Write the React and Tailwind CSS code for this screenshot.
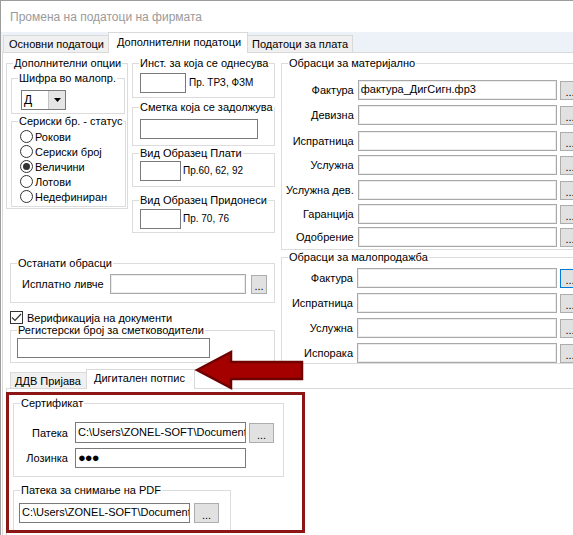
import React from 'react'

const GroupBox = ({ label, className = '', children }) => (
  <fieldset className={`border border-[#dcdcdc] min-w-0 ${className}`}>
    <legend className="ml-[6px] px-[1px] leading-[14px] h-[14px] whitespace-nowrap">{label}</legend>
    {children}
  </fieldset>
)

const TextBox = ({ value = '', className = '' }) => (
  <div className={`bg-white border px-[2px] leading-[17px] whitespace-nowrap overflow-hidden ${className}`}>{value}</div>
)

const Dots = ({ className = '' }) => (
  <div className={`bg-[#e1e1e1] border flex items-end justify-center pb-[1px] leading-[12px] ${className}`}>...</div>
)

const Radio = ({ label, checked }) => (
  <div className="h-[15px] flex items-center ml-[8px]">
    <span className="w-[13px] h-[13px] rounded-full border border-[#333333] bg-white flex items-center justify-center">
      {checked && <span className="w-[7px] h-[7px] rounded-full bg-[#333333]" />}
    </span>
    <span className="ml-[2px]">{label}</span>
  </div>
)

const material = [
  { label: 'Фактура', value: 'фактура_ДигСигн.фр3', mt: 'mt-[10px]' },
  { label: 'Девизна', mt: 'mt-[5px]' },
  { label: 'Испратница', mt: 'mt-[6px]' },
  { label: 'Услужна', mt: 'mt-[4px]' },
  { label: 'Услужна дев.', mt: 'mt-[5px]' },
  { label: 'Гаранција', mt: 'mt-[4px]' },
  { label: 'Одобрение', mt: 'mt-[3px]' },
]

const retail = [
  { label: 'Фактура', mt: 'mt-[4px]', focus: true },
  { label: 'Испратница', mt: 'mt-[5px]' },
  { label: 'Услужна', mt: 'mt-[5px]' },
  { label: 'Испорака', mt: 'mt-[5px]' },
]

const FileRow = ({ label, value, mt, focus, labelW }) => (
  <div className={`flex items-center h-[20px] ${mt}`}>
    <div className={`text-right whitespace-nowrap ${labelW}`}>{label}</div>
    <TextBox value={value} className="ml-[4px] w-[200px] h-[20px] border-[#a9a9a9] shadow-[inset_0_0_0_1px_#ececec]" />
    <Dots className={`ml-[3px] w-[20px] h-[19px] ${focus ? 'border-[#0078d7]' : 'border-[#adadad]'}`} />
  </div>
)

export default function App() {
  return (
    <div className="relative w-[573px] h-[535px] overflow-hidden bg-white border-l border-t border-[#9c9c9c] text-[11px] leading-[14px] text-black font-['Liberation_Sans',Arial,sans-serif] flex flex-col">
      {/* title */}
      <div className="h-[31px] shrink-0 pl-[9px] flex items-center text-[#9a9a9a] text-[12px]">Промена на податоци на фирмата</div>

      {/* main tabs */}
      <div className="h-[20px] shrink-0 flex items-end pl-[2px] bg-[#edf2f9] whitespace-nowrap">
        <div className="w-[105px] h-[17px] bg-[#f0f0f0] border-l border-t border-[#d9d9d9] pl-[5px] flex items-center">Основни податоци</div>
        <div className="w-[140px] h-[21px] -mb-px relative z-10 bg-white border-l border-t border-r border-[#d9d9d9] pl-[8px] pt-[2px]">Дополнителни податоци</div>
        <div className="w-[105px] h-[17px] bg-[#f0f0f0] border-t border-r border-[#d9d9d9] pl-[4px] flex items-center">Податоци за плата</div>
      </div>

      {/* main panel */}
      <div className="flex-1 ml-[1px] border-t border-l border-[#d9d9d9] flex flex-col">
        <div className="h-[313px] shrink-0 flex">
          {/* left part */}
          <div className="w-[277px] shrink-0 flex flex-col">
            <div className="flex">
              <GroupBox label="Дополнителни опции" className="ml-[3px] mt-[3px] w-[122px] h-[153px]">
                <GroupBox label="Шифра во малопр." className="ml-[4px] mt-[1px] w-[114px] h-[43px]">
                  <div className="ml-[9px] mt-[5px] w-[45px] h-[20px] border border-[#7a7a7a] bg-white flex">
                    <div className="flex-1 pl-[2px] leading-[18px] text-[12px]">Д</div>
                    <div className="w-[17px] bg-[#e5e5e5] border-l border-[#c4c4c4] flex items-center justify-center">
                      <svg width="7" height="4" viewBox="0 0 7 4"><path d="M0 0H7L3.5 4Z" fill="#000" /></svg>
                    </div>
                  </div>
                </GroupBox>
                <GroupBox label="Сериски бр. - статус" className="ml-[4px] w-[115px] h-[93px]">
                  <div className="mt-[1px]">
                    <Radio label="Рокови" />
                    <Radio label="Сериски број" />
                    <Radio label="Величини" checked />
                    <Radio label="Лотови" />
                    <Radio label="Недефиниран" />
                  </div>
                </GroupBox>
              </GroupBox>

              <div className="ml-[4px] w-[143px] flex flex-col">
                <GroupBox label="Инст. за која се однесува" className="mt-[3px] h-[42px]">
                  <div className="mt-[3px] ml-[7px] flex items-center">
                    <TextBox className="w-[46px] h-[20px] border-[#7a7a7a]" />
                    <span className="ml-[3px] text-[10px]">Пр. ТРЗ, ФЗМ</span>
                  </div>
                </GroupBox>
                <GroupBox label="Сметка која се задолжува" className="mt-[2px] h-[46px]">
                  <TextBox className="mt-[5px] ml-[7px] w-[118px] h-[20px] border-[#7a7a7a]" />
                </GroupBox>
                <GroupBox label="Вид Образец Плати" className="h-[41px]">
                  <div className="mt-[1px] ml-[7px] flex items-center">
                    <TextBox className="w-[41px] h-[20px] border-[#7a7a7a]" />
                    <span className="ml-[2px] text-[10px]">Пр.60, 62, 92</span>
                  </div>
                </GroupBox>
                <GroupBox label="Вид Образец Придонеси" className="mt-[6px] h-[40px]">
                  <div className="mt-[2px] ml-[7px] flex items-center">
                    <TextBox className="w-[41px] h-[20px] border-[#7a7a7a]" />
                    <span className="ml-[2px] text-[10px]">Пр. 70, 76</span>
                  </div>
                </GroupBox>
              </div>
            </div>

            <GroupBox label="Останати обрасци" className="ml-[7px] mt-[23px] w-[265px] h-[47px]">
              <div className="mt-[4px] h-[20px] flex items-center">
                <div className="w-[99px] pl-[11px] whitespace-nowrap">Исплатно ливче</div>
                <TextBox className="w-[136px] h-[20px] border-[#a9a9a9] shadow-[inset_0_0_0_1px_#ececec]" />
                <Dots className="ml-[5px] w-[16px] h-[19px] border-[#adadad]" />
              </div>
            </GroupBox>

            <div className="ml-[7px] mt-[8px] h-[13px] flex items-center">
              <span className="w-[13px] h-[13px] border border-[#333333] bg-white flex items-center justify-center">
                <svg width="11" height="9" viewBox="0 0 11 9"><path d="M1 4.5L4 7.5L10 1" fill="none" stroke="#333" strokeWidth="1.2" /></svg>
              </span>
              <span className="ml-[4px]">Верификација на документи</span>
            </div>

            <GroupBox label="Регистерски број за сметководители" className="ml-[7px] -mt-[1px] w-[265px] h-[40px]">
              <TextBox className="mt-[1px] ml-[6px] w-[193px] h-[20px] border-[#7a7a7a]" />
            </GroupBox>
          </div>

          {/* right part */}
          <div className="w-[300px] shrink-0 flex flex-col">
            <GroupBox label="Обрасци за материјално" className="ml-[1px] mt-[3px] w-[300px] h-[194px]">
              {material.map((r) => (
                <FileRow key={r.label} {...r} labelW="w-[72px]" />
              ))}
            </GroupBox>
            <GroupBox label="Обрасци за малопродажба" className="ml-[1px] w-[300px] h-[114px]">
              {retail.map((r) => (
                <FileRow key={r.label} {...r} labelW="w-[71px]" />
              ))}
            </GroupBox>
          </div>
        </div>

        {/* inner tabs */}
        <div className="h-[22px] shrink-0 flex items-end pl-[7px] whitespace-nowrap">
          <div className="w-[76px] h-[16px] bg-[#f0f0f0] border-l border-t border-[#d9d9d9] pl-[4px] flex items-center">ДДВ Пријава</div>
          <div className="w-[109px] h-[20px] -mb-px relative z-10 bg-white border-l border-t border-r border-[#d9d9d9] pl-[7px] pt-[1px]">Дигитален потпис</div>
        </div>

        <div className="flex-1 ml-[3px] border-t border-l border-[#d9d9d9]">
          <GroupBox label="Сертификат" className="ml-[6px] mt-[7px] w-[271px] h-[81px]">
            <div className="mt-[12px] h-[21px] flex items-center">
              <div className="w-[54px] text-right">Патека</div>
              <TextBox value="C:\Users\ZONEL-SOFT\Documents" className="ml-[7px] w-[171px] h-[21px] border-[#7a7a7a] leading-[18px] px-[1px]" />
              <Dots className="ml-[3px] w-[25px] h-[20px] border-[#adadad]" />
            </div>
            <div className="mt-[5px] h-[20px] flex items-center">
              <div className="w-[54px] text-right">Лозинка</div>
              <TextBox value="●●●" className="ml-[7px] w-[171px] h-[20px] border-[#7a7a7a] text-[13px] tracking-[-1px]" />
            </div>
          </GroupBox>
          <GroupBox label="Патека за снимање на PDF" className="ml-[6px] mt-[6px] w-[218px] h-[49px]">
            <div className="mt-[6px] ml-[5px] flex items-center">
              <TextBox value="C:\Users\ZONEL-SOFT\Documents" className="w-[171px] h-[20px] border-[#7a7a7a] px-[1px]" />
              <Dots className="ml-[4px] w-[25px] h-[20px] border-[#adadad]" />
            </div>
          </GroupBox>
        </div>
      </div>

      {/* annotation overlays */}
      <div className="absolute left-[5px] top-[391px] w-[299px] h-[141px] border-[3px] border-[#8c1616] z-20 pointer-events-none" />
      <svg className="absolute left-[189px] top-[344px] z-20" width="120" height="55" viewBox="0 0 120 55">
        <path d="M7 25L41 7V17H112V34H41V43Z" fill="#a50000" stroke="#6e0000" strokeWidth="2.5" strokeLinejoin="miter" />
      </svg>
    </div>
  )
}
